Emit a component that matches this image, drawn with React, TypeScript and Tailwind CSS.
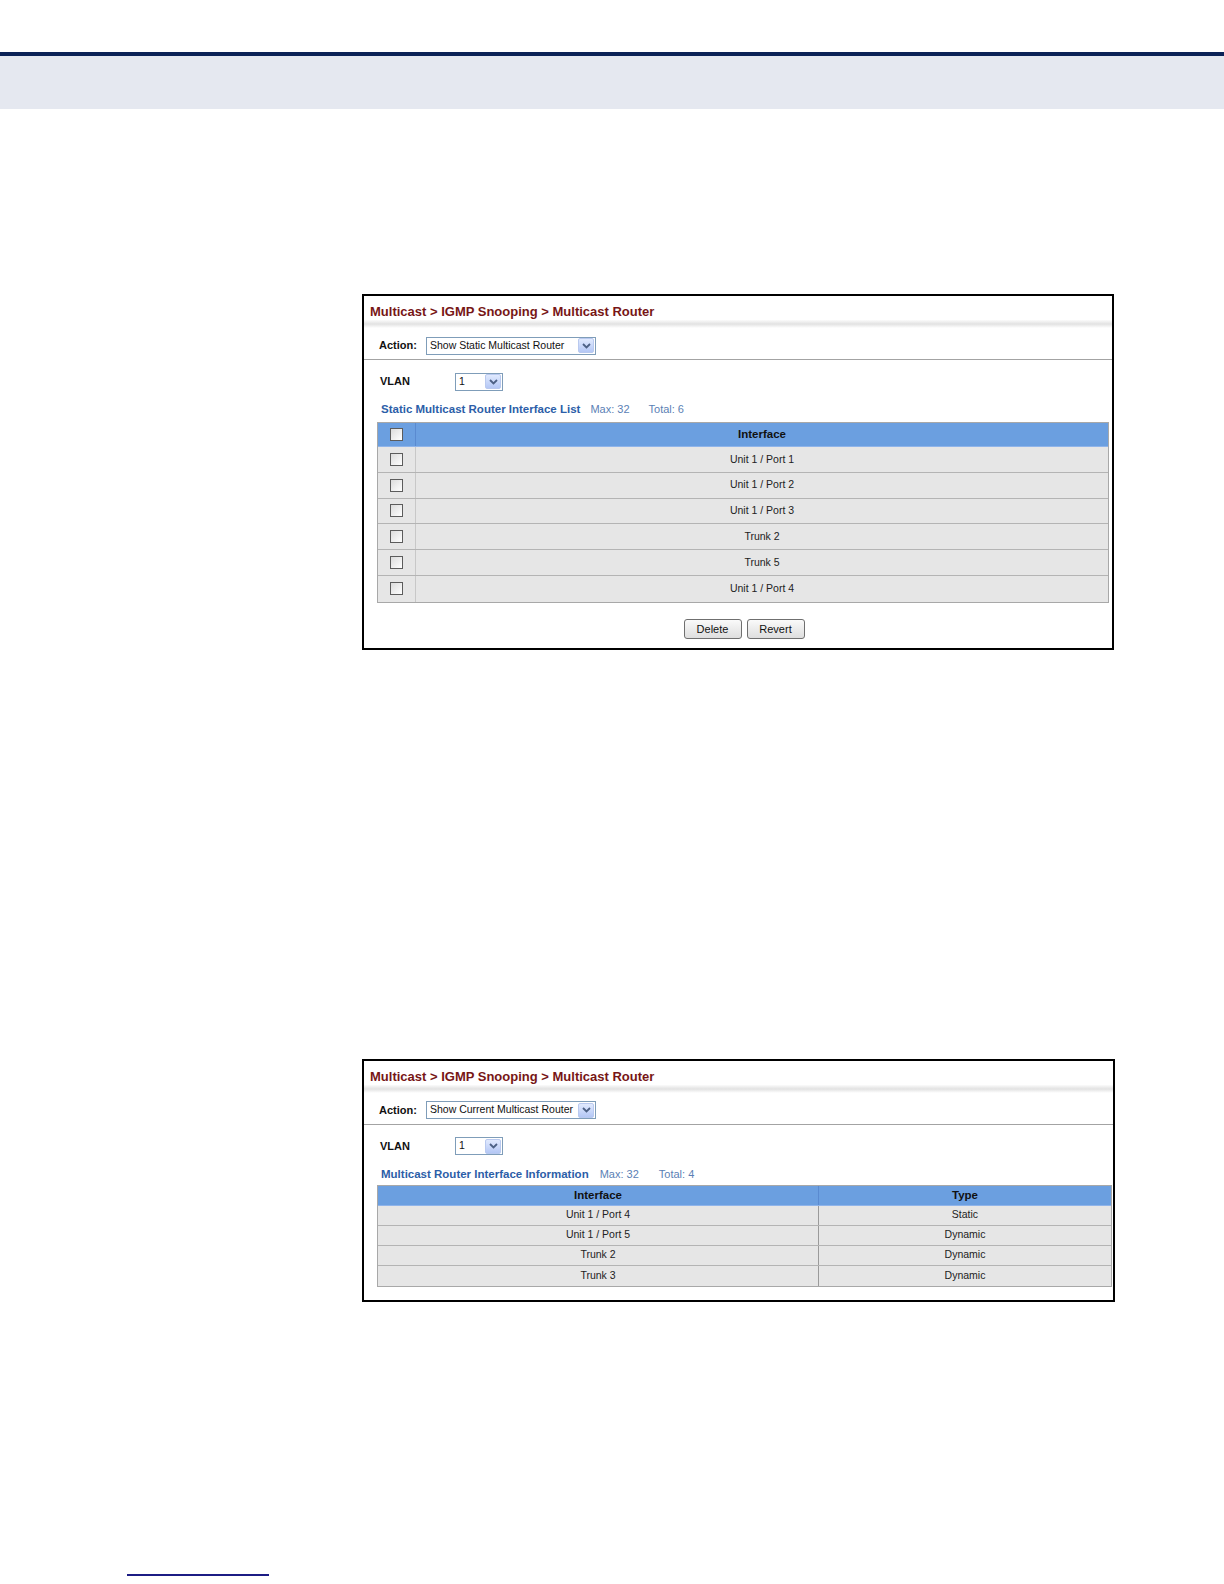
import React from 'react'

const font = { fontFamily: '"Liberation Sans", Arial, sans-serif' }

function Arrow() {
  return (
    <span className="flex h-[15px] w-[16px] items-center justify-center rounded-[2px] border border-[#b9c9ef] bg-gradient-to-b from-[#e1eafe] to-[#b4c7f5]">
      <svg width="9" height="6" viewBox="0 0 9 6">
        <path d="M1 1 L4.5 4.5 L8 1" fill="none" stroke="#4d6185" strokeWidth="1.8" />
      </svg>
    </span>
  )
}

function Select({ label, width }: { label: string; width: string }) {
  return (
    <div className={`flex h-[18px] items-center justify-between border border-[#7f9db9] bg-white pl-[3px] pr-[1px] ${width}`}>
      <span className="whitespace-nowrap text-[10.5px] text-[#111]">{label}</span>
      <Arrow />
    </div>
  )
}

function Checkbox() {
  return <span className="block h-[13px] w-[13px] border border-[#5c5c5c] bg-gradient-to-br from-[#dcdcdc] to-white" />
}

function PanelTop({ action, listTitle, max, total, maxGap, totalGap }: { action: string; listTitle: string; max: string; total: string; maxGap: string; totalGap: string }) {
  return (
    <>
      <div className="flex h-[24px] items-center pl-[6px] pt-[7px] text-[13px] font-bold text-[#771616]">
        Multicast &gt; IGMP Snooping &gt; Multicast Router
      </div>
      <div className="h-[8px] bg-gradient-to-b from-[#fbfbfb] via-[#e2e2e2] to-white" />
      <div className="flex h-[32px] items-center border-b border-[#a3a3a3] pl-[15px] pt-[4px]">
        <span className="w-[47px] text-[11px] font-bold text-[#111]">Action:</span>
        <Select label={action} width="w-[170px]" />
      </div>
      <div className="flex h-[42px] items-center pl-[16px] pt-[1px]">
        <span className="w-[75px] text-[11px] font-bold text-[#111]">VLAN</span>
        <Select label="1" width="w-[48px]" />
      </div>
      <div className="flex h-[14px] items-center pl-[17px] pt-[1px]">
        <span className="text-[11.5px] font-bold text-[#2c5ea8]">{listTitle}</span>
        <span className={`text-[11px] text-[#5b7fb5] ${maxGap}`}>{max}</span>
        <span className={`text-[11px] text-[#5b7fb5] ${totalGap}`}>{total}</span>
      </div>
    </>
  )
}

export default function App() {
  const rows1 = ['Unit 1 / Port 1', 'Unit 1 / Port 2', 'Unit 1 / Port 3', 'Trunk 2', 'Trunk 5', 'Unit 1 / Port 4']
  const rows2 = [
    ['Unit 1 / Port 4', 'Static'],
    ['Unit 1 / Port 5', 'Dynamic'],
    ['Trunk 2', 'Dynamic'],
    ['Trunk 3', 'Dynamic'],
  ]

  return (
    <div className="relative h-[1584px] w-[1224px] bg-white" style={font}>
      {/* page header */}
      <div className="h-[52px]" />
      <div className="h-[4px] bg-[#0b2257]" />
      <div className="h-[53px] bg-[#e5e8f0]" />

      {/* static router panel */}
      <div className="ml-[362px] mt-[185px] w-[752px] border-2 border-black">
        <PanelTop
          action="Show Static Multicast Router"
          listTitle="Static Multicast Router Interface List"
          max="Max: 32"
          total="Total: 6"
          maxGap="ml-[10px]"
          totalGap="ml-[19px]"
        />
        <div className="ml-[13px] mr-[3px] mt-[6px] border border-[#a8a8a8]">
          <div className="flex h-[24px] border-b border-[#8fb4ea] bg-[#6b9fe0]">
            <div className="flex w-[38px] items-center justify-center border-r border-[#5a8ad0]">
              <Checkbox />
            </div>
            <div className="flex flex-1 items-center justify-center text-[11.5px] font-bold text-[#111]">Interface</div>
          </div>
          {rows1.map((r, i) => (
            <div key={i} className={`flex h-[25.8px] bg-[#e6e6e6] ${i < rows1.length - 1 ? 'border-b border-[#b4b4b4]' : ''}`}>
              <div className="flex w-[38px] items-center justify-center border-r border-[#c8c8c8]">
                <Checkbox />
              </div>
              <div className="flex flex-1 items-center justify-center text-[10.5px] text-[#222]">{r}</div>
            </div>
          ))}
        </div>
        <div className="flex items-center justify-center gap-[5px] pb-[9px] pl-[12px] pt-[16px]">
          <button className="h-[20px] w-[58px] rounded-[3px] border border-[#6f6f6f] bg-gradient-to-b from-[#fafafa] to-[#dedede] text-[11px] text-[#111]">Delete</button>
          <button className="h-[20px] w-[58px] rounded-[3px] border border-[#6f6f6f] bg-gradient-to-b from-[#fafafa] to-[#dedede] text-[11px] text-[#111]">Revert</button>
        </div>
      </div>

      {/* current router panel */}
      <div className="ml-[362px] mt-[409px] w-[753px] border-2 border-black">
        <PanelTop
          action="Show Current Multicast Router"
          listTitle="Multicast Router Interface Information"
          max="Max: 32"
          total="Total: 4"
          maxGap="ml-[11px]"
          totalGap="ml-[20px]"
        />
        <div className="mb-[13px] ml-[13px] mr-[1px] mt-[4px] border border-[#a8a8a8]">
          <div className="flex h-[20px] border-b border-[#8fb4ea] bg-[#6b9fe0] text-[11.5px] font-bold text-[#111]">
            <div className="flex w-[441px] items-center justify-center border-r border-[#5a8ad0]">Interface</div>
            <div className="flex flex-1 items-center justify-center">Type</div>
          </div>
          {rows2.map((r, i) => (
            <div key={i} className={`flex h-[20px] bg-[#e6e6e6] text-[10.5px] text-[#222] ${i < rows2.length - 1 ? 'border-b border-[#b4b4b4]' : ''}`}>
              <div className="flex w-[441px] items-center justify-center border-r border-[#9a9a9a]">{r[0]}</div>
              <div className="flex flex-1 items-center justify-center">{r[1]}</div>
            </div>
          ))}
        </div>
      </div>

      {/* footer rule */}
      <div className="absolute left-[127px] top-[1574px] h-[2px] w-[142px] bg-[#1c1c84]" />
    </div>
  )
}
